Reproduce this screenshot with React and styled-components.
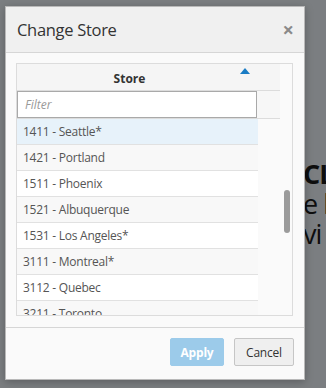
import { createGlobalStyle, styled } from "styled-components";

const GlobalStyle = createGlobalStyle`
  html, body {
    margin: 0;
    padding: 0;
    background: #7b7e81;
    overflow: hidden;
  }
  body {
    font-family: "Open Sans", "Noto Sans", sans-serif;
  }
`;

const Stage = styled.div`
  display: flex;
  align-items: flex-start;
  width: 326px;
  height: 388px;
  overflow: hidden;
`;

const Dialog = styled.div`
  position: relative;
  z-index: 1;
  flex: 0 0 auto;
  width: 298px;
  margin: 6px 0 0 5px;
  background: #fafafa;
  border: 1px solid #b9b9b9;
  box-shadow: 0 2px 8px rgba(0, 0, 0, 0.25);
  display: flex;
  flex-direction: column;
`;

const Header = styled.div`
  display: flex;
  align-items: center;
  justify-content: space-between;
  height: 45px;
  padding: 0 10px 0 11px;
  background: #f0f0f0;
  border-bottom: 1px solid #d6d6d6;
`;

const Title = styled.span`
  font-size: 16.5px;
  color: #333;
  letter-spacing: -0.3px;
`;

const Close = styled.span`
  font-size: 20px;
  font-weight: 700;
  color: #8a8a8a;
  line-height: 1;
  margin-top: 1px;
`;

const Body = styled.div`
  padding: 10px 11px 11px 10px;
`;

const Grid = styled.div`
  display: flex;
  height: 251px;
  border: 1px solid #dcdcdc;
  background: #fafafa;
  overflow: hidden;
`;

const Content = styled.div`
  width: 263px;
  display: flex;
  flex-direction: column;
`;

const HeadRow = styled.div`
  position: relative;
  display: flex;
  align-items: flex-end;
  height: 26px;
  background: #f5f5f5;
  border-bottom: 1px solid #dcdcdc;
`;

const HeadCell = styled.div`
  width: 225px;
  text-align: center;
  font-size: 12px;
  font-weight: 700;
  color: #333;
  padding-bottom: 3px;
`;

const SortArrow = styled.span`
  position: absolute;
  left: 223px;
  top: 4px;
  width: 0;
  height: 0;
  border-left: 5px solid transparent;
  border-right: 5px solid transparent;
  border-bottom: 6px solid #1a7cc4;
`;

const FilterRow = styled.div`
  display: flex;
  height: 27px;
  background: #f7f7f7;
  border-bottom: 1px solid #dcdcdc;
`;

const FilterInput = styled.input`
  box-sizing: border-box;
  width: 240px;
  height: 27px;
  margin: 0;
  padding: 0 7px;
  border: 1px solid #a9a9a9;
  background: #fff;
  font-family: "Open Sans", "Noto Sans", sans-serif;
  font-size: 12px;
  font-style: italic;
  outline: none;
  &::placeholder {
    color: #999;
  }
`;

const Rows = styled.div`
  width: 241px;
  flex: 1;
  overflow: hidden;
`;

const Row = styled.div`
  display: flex;
  align-items: center;
  height: 25px;
  padding-left: 6px;
  border-bottom: 1px solid #e1e1e1;
  font-size: 12px;
  letter-spacing: -0.25px;
  color: #555;
  background: ${(p) => (p.$selected ? "#e7f2fa" : p.$alt ? "#f8f8f8" : "#fff")};
`;

const Track = styled.div`
  width: 12px;
  padding-top: 126px;
  display: flex;
  justify-content: center;
`;

const Thumb = styled.div`
  width: 6px;
  height: 43px;
  border-radius: 3px;
  background: #9b9b9b;
  margin-left: 2px;
`;

const Footer = styled.div`
  display: flex;
  justify-content: flex-end;
  gap: 10px;
  padding: 10px 10px 13px;
  border-top: 1px solid #d6d6d6;
`;

const Button = styled.button`
  box-sizing: border-box;
  height: 28px;
  width: ${(p) => (p.$primary ? "54px" : "60px")};
  padding: 0;
  border-radius: 2px;
  font-family: "Open Sans", "Noto Sans", sans-serif;
  font-size: 12px;
  letter-spacing: -0.2px;
  font-weight: ${(p) => (p.$primary ? 700 : 400)};
  color: ${(p) => (p.$primary ? "#fff" : "#333")};
  background: ${(p) => (p.$primary ? "#9ccbea" : "#efefef")};
  border: 1px solid ${(p) => (p.$primary ? "#9ccbea" : "#c6c6c6")};
`;

const Behind = styled.div`
  margin: 160px 0 0 -2px;
  color: #0e0e0e;
  font-family: "Open Sans", "Noto Sans", sans-serif;
  white-space: nowrap;
  display: flex;
  flex-direction: column;
  gap: 2px;
  overflow: hidden;
`;

const BehindLine = styled.span`
  font-size: 27px;
  line-height: 28px;
  letter-spacing: -1px;
  font-weight: ${(p) => (p.$bold ? 700 : 400)};
`;

const stores = [
  "1411 - Seattle*",
  "1421 - Portland",
  "1511 - Phoenix",
  "1521 - Albuquerque",
  "1531 - Los Angeles*",
  "3111 - Montreal*",
  "3112 - Quebec",
  "3211 - Toronto",
];

export default function App() {
  return (
    <>
      <GlobalStyle />
      <Stage>
        <Dialog>
          <Header>
            <Title>Change Store</Title>
            <Close>×</Close>
          </Header>
          <Body>
            <Grid>
              <Content>
                <HeadRow>
                  <HeadCell>Store</HeadCell>
                  <SortArrow />
                </HeadRow>
                <FilterRow>
                  <FilterInput placeholder="Filter" />
                </FilterRow>
                <Rows>
                  {stores.map((s, i) => (
                    <Row key={s} $selected={i === 0} $alt={i % 2 === 1}>
                      {s}
                    </Row>
                  ))}
                </Rows>
              </Content>
              <Track>
                <Thumb />
              </Track>
            </Grid>
          </Body>
          <Footer>
            <Button $primary>Apply</Button>
            <Button>Cancel</Button>
          </Footer>
        </Dialog>
        <Behind>
          <BehindLine $bold>CL</BehindLine>
          <BehindLine>e l</BehindLine>
          <BehindLine>vi</BehindLine>
        </Behind>
      </Stage>
    </>
  );
}
